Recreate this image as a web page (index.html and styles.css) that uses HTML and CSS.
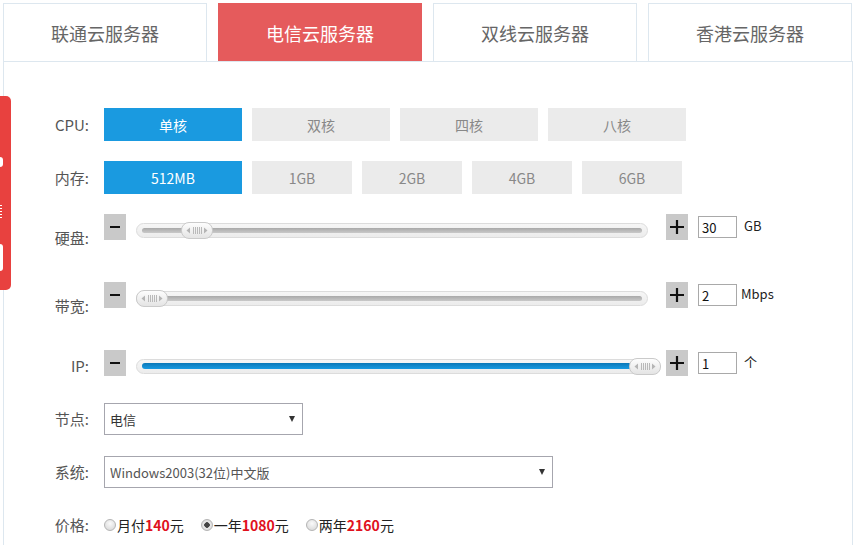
FILE: index.html
```html
<!DOCTYPE html>
<html lang="zh-CN">

<head>
    <meta charset="UTF-8">
    <meta name="viewport" content="width=device-width, initial-scale=1.0">
    <title>云服务器配置</title>
    <link rel="stylesheet" href="styles.css">
</head>

<body>
    <div class="side-tab">
        <span class="side-dot"></span>
        <span class="side-text"></span>
        <span class="side-box"></span>
    </div>

    <div class="container">
        <ul class="tabs">
            <li class="tab">联通云服务器</li>
            <li class="tab active">电信云服务器</li>
            <li class="tab">双线云服务器</li>
            <li class="tab">香港云服务器</li>
        </ul>

        <div class="panel">
            <div class="row">
                <label class="row-label">CPU:</label>
                <div class="options">
                    <span class="opt wide selected">单核</span>
                    <span class="opt wide">双核</span>
                    <span class="opt wide">四核</span>
                    <span class="opt wide">八核</span>
                </div>
            </div>

            <div class="row">
                <label class="row-label">内存:</label>
                <div class="options">
                    <span class="opt wide selected">512MB</span>
                    <span class="opt">1GB</span>
                    <span class="opt">2GB</span>
                    <span class="opt">4GB</span>
                    <span class="opt">6GB</span>
                </div>
            </div>

            <div class="row slider-row">
                <label class="row-label">硬盘:</label>
                <button class="step" type="button">
                    <svg width="10" height="2" viewBox="0 0 10 2"><rect width="10" height="2" fill="#111"/></svg>
                </button>
                <div class="track">
                    <div class="bar"></div>
                    <span class="handle" style="left: 44px">
                        <svg width="30" height="15" viewBox="0 0 30 15">
                            <path d="M8 4.5 L4.5 7.5 L8 10.5 Z" fill="#b5b5b5"/>
                            <path d="M22 4.5 L25.5 7.5 L22 10.5 Z" fill="#b5b5b5"/>
                            <path d="M11.5 4v7M13.5 4v7M15.5 4v7M17.5 4v7M19.5 4v7" stroke="#b9b9b9" stroke-width="1"/>
                        </svg>
                    </span>
                </div>
                <button class="step plus" type="button">
                    <svg width="14" height="14" viewBox="0 0 14 14"><path d="M0 7h14M7 0v14" stroke="#111" stroke-width="2.2"/></svg>
                </button>
                <input class="num" type="text" value="30">
                <span class="unit">GB</span>
            </div>

            <div class="row slider-row">
                <label class="row-label">带宽:</label>
                <button class="step" type="button">
                    <svg width="10" height="2" viewBox="0 0 10 2"><rect width="10" height="2" fill="#111"/></svg>
                </button>
                <div class="track">
                    <div class="bar"></div>
                    <span class="handle" style="left: -1px">
                        <svg width="30" height="15" viewBox="0 0 30 15">
                            <path d="M8 4.5 L4.5 7.5 L8 10.5 Z" fill="#b5b5b5"/>
                            <path d="M22 4.5 L25.5 7.5 L22 10.5 Z" fill="#b5b5b5"/>
                            <path d="M11.5 4v7M13.5 4v7M15.5 4v7M17.5 4v7M19.5 4v7" stroke="#b9b9b9" stroke-width="1"/>
                        </svg>
                    </span>
                </div>
                <button class="step plus" type="button">
                    <svg width="14" height="14" viewBox="0 0 14 14"><path d="M0 7h14M7 0v14" stroke="#111" stroke-width="2.2"/></svg>
                </button>
                <input class="num" type="text" value="2">
                <span class="unit unit-tight">Mbps</span>
            </div>

            <div class="row slider-row ip-row">
                <label class="row-label">IP:</label>
                <button class="step" type="button">
                    <svg width="10" height="2" viewBox="0 0 10 2"><rect width="10" height="2" fill="#111"/></svg>
                </button>
                <div class="track">
                    <div class="bar blue"></div>
                    <span class="handle" style="left: 492px">
                        <svg width="30" height="15" viewBox="0 0 30 15">
                            <path d="M8 4.5 L4.5 7.5 L8 10.5 Z" fill="#b5b5b5"/>
                            <path d="M22 4.5 L25.5 7.5 L22 10.5 Z" fill="#b5b5b5"/>
                            <path d="M11.5 4v7M13.5 4v7M15.5 4v7M17.5 4v7M19.5 4v7" stroke="#b9b9b9" stroke-width="1"/>
                        </svg>
                    </span>
                </div>
                <button class="step plus" type="button">
                    <svg width="14" height="14" viewBox="0 0 14 14"><path d="M0 7h14M7 0v14" stroke="#111" stroke-width="2.2"/></svg>
                </button>
                <input class="num" type="text" value="1">
                <span class="unit">个</span>
            </div>

            <div class="row select-row">
                <label class="row-label">节点:</label>
                <div class="select node">
                    <select>
                        <option>电信</option>
                    </select>
                </div>
            </div>

            <div class="row select-row">
                <label class="row-label">系统:</label>
                <div class="select system">
                    <select>
                        <option>Windows2003(32位)中文版</option>
                    </select>
                </div>
            </div>

            <div class="row price-row">
                <label class="row-label">价格:</label>
                <label class="radio"><input type="radio" name="price">月付<b>140</b>元</label>
                <label class="radio"><input type="radio" name="price" checked>一年<b>1080</b>元</label>
                <label class="radio"><input type="radio" name="price">两年<b>2160</b>元</label>
            </div>
        </div>
    </div>
</body>

</html>
```

FILE: styles.css
```css
body {
    margin: 0;
    font-family: "Noto Sans CJK SC", "Liberation Sans", sans-serif;
    color: #555;
    background: #fff;
    overflow: hidden;
}

.container {
    padding: 3px 2px 0 3px;
}

/* tabs */
.tabs {
    display: flex;
    gap: 11px;
    list-style: none;
    margin: 0;
    padding: 0;
}

.tab {
    width: 202px;
    height: 57px;
    border: 1px solid #dde7ef;
    border-bottom: none;
    text-align: center;
    line-height: 58px;
    font-size: 18px;
    color: #666;
}

.tab.active {
    background-color: #e55b5c;
    border-color: #e55b5c;
    color: #fff;
}

/* panel */
.panel {
    border: 1px solid #dde7ef;
    border-bottom: none;
    height: 437px;
    padding: 46px 0 0 15px;
}

.row {
    display: flex;
    align-items: center;
    margin-bottom: 20px;
}

.row-label {
    width: 70px;
    margin-right: 15px;
    text-align: right;
    font-size: 15px;
    line-height: 20px;
    color: #555;
}

.options {
    display: flex;
    gap: 10px;
}

.opt {
    width: 100px;
    height: 33px;
    display: flex;
    align-items: center;
    justify-content: center;
    background-color: #ebebeb;
    color: #888;
    font-size: 14px;
}

.opt.wide {
    width: 138px;
}

.opt.selected {
    background-color: #1a9ae0;
    color: #fff;
}

/* sliders */
.slider-row {
    align-items: flex-start;
    height: 26px;
    margin-bottom: 42px;
}

.slider-row .row-label {
    margin-top: 14px;
}

.ip-row {
    margin-bottom: 27px;
}

.ip-row .row-label {
    margin-top: 6px;
}

.step {
    width: 22px;
    height: 26px;
    padding: 0;
    border: none;
    background-color: #c9c9c9;
    display: flex;
    align-items: center;
    justify-content: center;
}

.track {
    position: relative;
    box-sizing: border-box;
    width: 512px;
    height: 15px;
    margin: 9px 18px 0 10px;
    padding: 4px 5px;
    border: 1px solid #dcdcdc;
    border-radius: 8px;
    background: linear-gradient(#f6f6f6, #ececec);
}

.bar {
    height: 5px;
    border-radius: 3px;
    background: linear-gradient(#a9a9a9, #c9c9c9);
}

.bar.blue {
    height: 6px;
    margin-top: -1px;
    margin-right: 10px;
    background: linear-gradient(#0a78b8, #1a9be2);
}

.handle {
    position: absolute;
    top: -2px;
    width: 32px;
    height: 17px;
    box-sizing: border-box;
    border: 1px solid #cacaca;
    border-radius: 8px;
    background: linear-gradient(#fdfdfd, #e4e4e4);
    display: flex;
    align-items: center;
    justify-content: center;
}

.num {
    box-sizing: border-box;
    width: 39px;
    height: 22px;
    margin: 2px 0 0 10px;
    padding: 0 3px;
    border: 1px solid #a9a9a9;
    font-family: inherit;
    font-size: 13px;
    color: #111;
}

.unit {
    margin: 2px 0 0 7px;
    font-size: 13px;
    line-height: 20px;
    color: #222;
}

.unit-tight {
    margin-left: 4px;
}

/* selects */
.select-row {
    margin-bottom: 21px;
}

.select {
    position: relative;
    box-sizing: border-box;
    height: 32px;
    border: 1px solid #a6a6ae;
}

.select.node {
    width: 199px;
}

.select.system {
    width: 449px;
}

.select::after {
    content: "";
    position: absolute;
    right: 7px;
    top: 12px;
    border-left: 3.5px solid transparent;
    border-right: 3.5px solid transparent;
    border-top: 6px solid #333;
}

.select select {
    appearance: none;
    width: 100%;
    height: 100%;
    border: none;
    outline: none;
    background: transparent;
    padding: 0 0 0 5px;
    font-family: inherit;
    font-size: 13px;
    color: #333;
}

.select.system select {
    color: #555;
}

/* price */
.price-row {
    margin-top: 27px;
}

.radio {
    display: flex;
    align-items: center;
    margin-right: 17px;
    font-size: 14px;
    line-height: 18px;
    color: #222;
}

.radio input {
    appearance: none;
    width: 12px;
    height: 12px;
    margin: 0 1px 0 0;
    border: 1px solid #b4b4b4;
    border-radius: 50%;
    background: radial-gradient(circle at 50% 35%, #fafafa, #d4d4d4);
}

.radio input:checked {
    background: radial-gradient(circle, #444 0 2.5px, #eaeaea 3px, #cfcfcf);
}

.radio b {
    color: #e0111d;
}

/* floating side tab */
.side-tab {
    position: absolute;
    left: 0;
    top: 96px;
    width: 11px;
    height: 194px;
    border-radius: 0 5px 5px 0;
    background-color: #e8413f;
    display: flex;
    flex-direction: column;
    padding-top: 61px;
    box-sizing: border-box;
}

.side-dot {
    width: 3px;
    height: 10px;
    border-radius: 0 4px 4px 0;
    background-color: #fff;
}

.side-text {
    width: 2px;
    height: 13px;
    margin-top: 38px;
    background: repeating-linear-gradient(#fff 0 1px, transparent 1px 3px);
}

.side-box {
    width: 3px;
    height: 27px;
    margin-top: 26px;
    border-radius: 0 3px 3px 0;
    background-color: #fff;
}
```
